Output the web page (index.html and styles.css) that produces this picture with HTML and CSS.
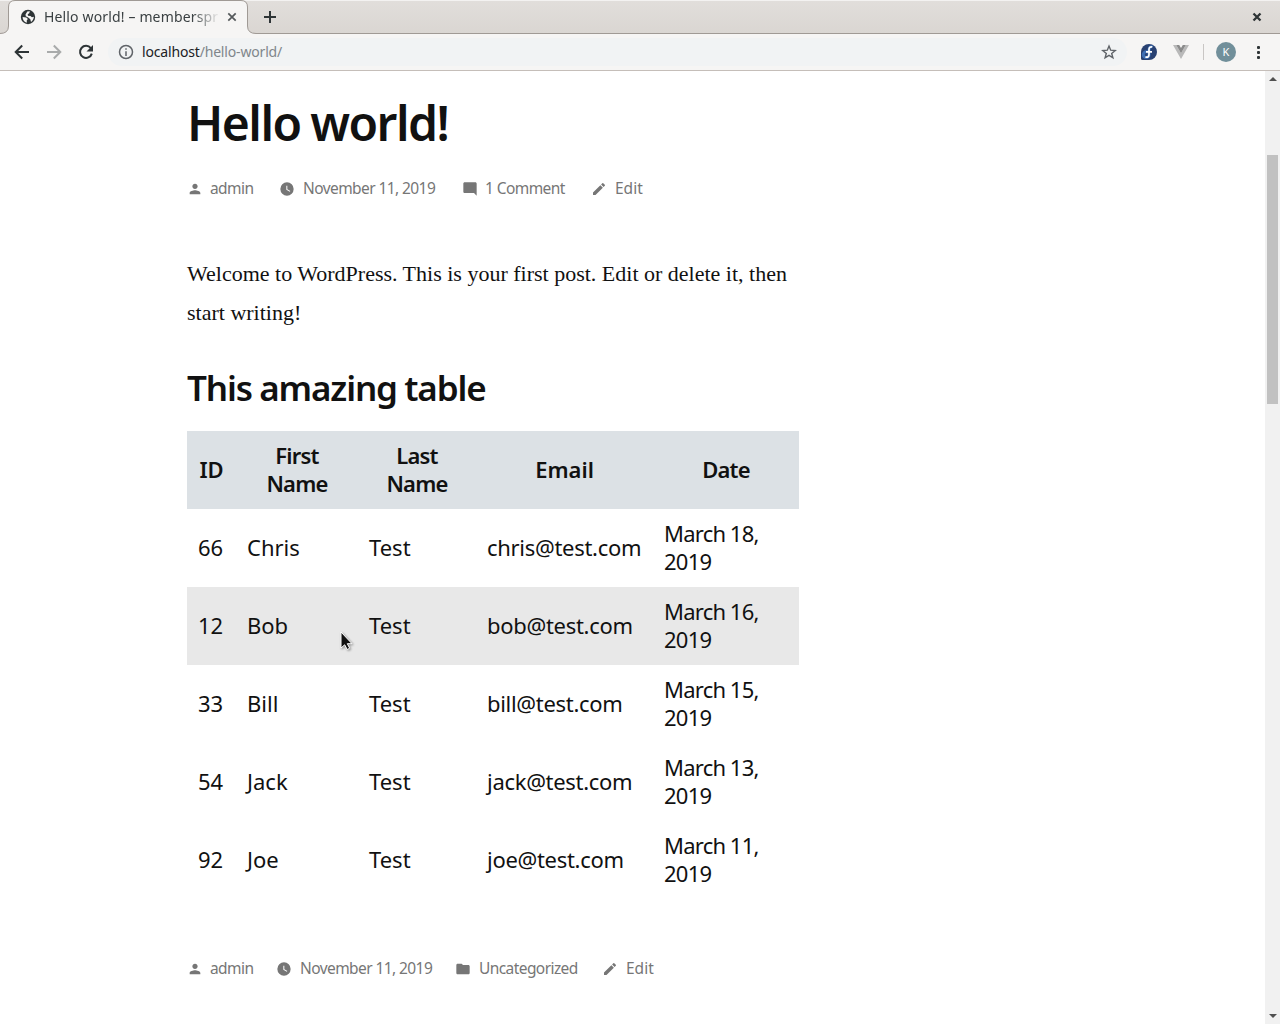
FILE: index.html
```html
<!DOCTYPE html>
<html lang="en">
<head>
<meta charset="utf-8">
<title>Hello world!</title>
<link rel="stylesheet" href="styles.css">
</head>
<body>
<svg class="defs" width="0" height="0">
  <symbol id="user" viewBox="0 0 24 24"><path d="M12 12c2.210 0 4-1.790 4-4s-1.790-4-4-4-4 1.790-4 4 1.790 4 4 4zm0 2c-2.670 0-8 1.340-8 4v2h16v-2c0-2.660-5.330-4-8-4z"/></symbol>
  <symbol id="clock" viewBox="0 0 24 24"><path fill-rule="evenodd" d="M12 2a10 10 0 1 0 0 20 10 10 0 0 0 0-20zm4.200 14.200L11 13V7h1.500v5.200l4.500 2.700z"/></symbol>
  <symbol id="comment" viewBox="0 0 24 24"><path d="M21.990 4c0-1.100-.89-2-1.990-2H4c-1.100 0-2 .9-2 2v12c0 1.100.9 2 2 2h14l4 4z"/></symbol>
  <symbol id="pencil" viewBox="0 0 24 24"><path d="M3 17.250V21h3.750L17.810 9.940l-3.750-3.750zM20.710 7.040a1 1 0 0 0 0-1.410l-2.340-2.340a1 1 0 0 0-1.410 0l-1.830 1.830 3.750 3.750z"/></symbol>
  <symbol id="folder" viewBox="0 0 24 24"><path d="M10 4H4c-1.100 0-2 .9-2 2v12c0 1.100.9 2 2 2h16c1.100 0 2-.9 2-2V8c0-1.100-.9-2-2-2h-8z"/></symbol>
</svg>

<div class="window">
  <header class="tabstrip">
    <svg class="tab-shape" width="256" height="34" viewBox="0 0 256 34"><path class="fill" d="M0 34v-.5Q8.500 33.500 8.500 26V7Q8.500.5 15 .5H241Q247.500.5 247.500 7V26Q247.500 33.500 256 33.500V34z"/><path class="line" d="M0 33.500Q8.500 33.500 8.500 26V7Q8.500.5 15 .5H241Q247.500.5 247.500 7V26Q247.500 33.500 256 33.500"/></svg>
    <div class="tab">
      <svg class="globe" width="16" height="16" viewBox="0 0 16 16"><circle cx="8" cy="8" r="7.200"/><path d="M2.600 8.100 6.300 8.500 7.900 10 6.800 11.300V13.800C4.300 13.200 2.600 11 2.600 8.100zM7.300 2.600l2.600-.4L9.200 4.300l-1.500.9.300 1.500 2.500.2 1.400 1.300 2-.4C13.700 10 12.600 12 11 12.900L10.300 10.200 8.200 8.400 5.800 7.300 5.500 5.500z"/></svg>
      <span class="tab-title">Hello world! – memberspr</span>
      <svg class="tab-close" width="10" height="10" viewBox="0 0 10 10"><path d="M1.300 1.300l7.400 7.400M8.700 1.300L1.300 8.700"/></svg>
    </div>
    <svg class="new-tab" width="14" height="14" viewBox="0 0 14 14"><path d="M7 1v12M1 7h12"/></svg>
    <svg class="window-close" width="10" height="10" viewBox="0 0 10 10"><path d="M1.500 1.500l7 7M8.500 1.500l-7 7"/></svg>
  </header>

  <nav class="toolbar">
    <svg class="nav-icon" width="16" height="16" viewBox="0 0 16 16"><path d="M15 8H2M8.200 1.500L1.700 8l6.500 6.500"/></svg>
    <svg class="nav-icon forward" width="16" height="16" viewBox="0 0 16 16"><path d="M1 8h13M7.800 1.500L14.300 8l-6.500 6.500"/></svg>
    <svg class="nav-icon" width="16" height="16" viewBox="0 0 16 16"><path d="M12.800 4.200A6 6 0 1 0 13.800 9.600"/><path class="head" d="M15 1v6.500H8.500z"/></svg>
    <div class="address">
      <svg class="info" width="16" height="16" viewBox="0 0 16 16"><circle cx="8" cy="8" r="6.500"/><path d="M8 7.200V12M8 4.200v1.600"/></svg>
      <span class="url"><b>localhost</b>/hello-world/</span>
      <svg class="star" width="16" height="16" viewBox="0 0 16 16"><path d="M8 2l1.700 4.200 4.500.3-3.500 2.900 1.200 4.400L8 11.400l-3.900 2.400 1.200-4.400L1.800 6.500l4.500-.3z"/></svg>
    </div>
    <svg class="fedora" width="16" height="16" viewBox="0 0 16 16"><path class="bg" d="M8 0a8 8 0 1 1 0 16H1.500A1.500 1.500 0 0 1 0 14.500V8a8 8 0 0 1 8-8z"/><path class="ring" d="M7.500 7.800H5.200a2.900 2.900 0 1 0 2.900 2.900V5.200a2.500 2.500 0 0 1 3.500-2.300"/><path class="f" d="M4.500 12.800c1.800 1 3.500 0 3.500-2V5.300c0-1.900 1.400-2.800 3.300-2.300M5 7.900h6"/></svg>
    <svg class="vue" width="16" height="14" viewBox="0 0 16 14"><path fill="#b9b9b9" d="M0 0h3.200L8 8.200 12.800 0H16L8 14z"/><path fill="#8b8b8b" d="M3.200 0h3L8 3.100 9.800 0h3L8 8.200z"/></svg>
    <span class="divider"></span>
    <span class="avatar">K</span>
    <span class="menu"><i></i><i></i><i></i></span>
  </nav>

  <div class="viewport">
    <main class="post">
      <h1>Hello world!</h1>
      <div class="meta">
        <span class="m-user"><svg><use href="#user"/></svg>admin</span>
        <span class="m-date"><svg><use href="#clock"/></svg>November 11, 2019</span>
        <span class="m-comment"><svg><use href="#comment"/></svg>1 Comment</span>
        <span class="m-edit"><svg><use href="#pencil"/></svg>Edit</span>
      </div>
      <p>Welcome to WordPress. This is your first post. Edit or delete it, then<br>start writing!</p>
      <h2>This amazing table</h2>
      <table>
        <colgroup><col class="c-id"><col class="c-first"><col class="c-last"><col class="c-email"><col class="c-date"></colgroup>
        <thead><tr><th>ID</th><th class="tight">First<br>Name</th><th class="tight">Last<br>Name</th><th>Email</th><th class="tight">Date</th></tr></thead>
        <tbody>
          <tr><td>66</td><td>Chris</td><td>Test</td><td>chris@test.com</td><td>March 18,<br>2019</td></tr>
          <tr class="hover"><td>12</td><td>Bob</td><td>Test</td><td>bob@test.com</td><td>March 16,<br>2019</td></tr>
          <tr><td>33</td><td>Bill</td><td>Test</td><td>bill@test.com</td><td>March 15,<br>2019</td></tr>
          <tr><td>54</td><td>Jack</td><td>Test</td><td>jack@test.com</td><td>March 13,<br>2019</td></tr>
          <tr><td>92</td><td>Joe</td><td>Test</td><td>joe@test.com</td><td>March 11,<br>2019</td></tr>
        </tbody>
      </table>
      <div class="meta footer-meta">
        <span class="m-user"><svg><use href="#user"/></svg>admin</span>
        <span class="m-date"><svg><use href="#clock"/></svg>November 11, 2019</span>
        <span class="m-cat"><svg><use href="#folder"/></svg>Uncategorized</span>
        <span class="m-edit"><svg><use href="#pencil"/></svg>Edit</span>
      </div>
    </main>
    <aside class="scrollbar">
      <svg width="8" height="4" viewBox="0 0 8 4"><path d="M0 4l4-4 4 4z"/></svg>
      <div class="thumb"></div>
      <svg width="8" height="4" viewBox="0 0 8 4"><path d="M0 0l4 4 4-4z"/></svg>
    </aside>
  </div>
</div>
<svg class="cursor" width="15" height="22" viewBox="0 0 15 22"><path d="M1 1v16l3.700-3.200 2.500 4.700 2.500-1.300-2.400-4.500H12z"/></svg>
</body>
</html>
```
FILE: styles.css
```css
* { box-sizing: border-box; }
body { margin: 0; font-family: "Noto Sans", sans-serif; color: #111; background: #fff; }
svg { display: block; flex: none; }
.defs { position: absolute; }
.window { height: 1024px; display: flex; flex-direction: column; overflow: hidden; }

.tabstrip { height: 34px; flex: none; display: flex; align-items: center; background: linear-gradient(#e1dedb, #dad6d2); border-bottom: 1px solid #a09a95; border-top: 1px solid #f3f2f1; }
.tab-shape { margin: 0 -256px 0 0; position: relative; }
.tab-shape .fill { fill: #f6f5f4; }
.tab-shape .line { fill: none; stroke: #a09a95; }
.tab { width: 248px; padding-left: 20px; display: flex; align-items: center; position: relative; }
.globe circle { fill: #2e3436; }
.globe path { fill: #f6f5f4; }
.tab-title { width: 176px; margin: 0 7px 0 8px; white-space: nowrap; font-size: 14px; line-height: 20px; letter-spacing: .15px; color: #3a4042; -webkit-mask-image: linear-gradient(90deg, #000 148px, transparent 176px); mask-image: linear-gradient(90deg, #000 148px, transparent 176px); }
.tab-close path { stroke: #55595b; stroke-width: 1.700; }
.new-tab { margin-left: 15px; }
.new-tab path { stroke: #2e3436; stroke-width: 2; }
.window-close { margin-left: auto; margin-right: 18px; }
.window-close path { stroke: #2e3436; stroke-width: 2.300; }

.toolbar { height: 37px; flex: none; display: flex; align-items: center; padding-left: 14px; background: #f6f5f4; border-bottom: 1px solid #c5beb9; }
.nav-icon { margin-right: 16px; fill: none; stroke: #2e3436; stroke-width: 2; }
.nav-icon.forward { stroke: #a9abab; }
.nav-icon .head { fill: #2e3436; stroke: none; }
.address { width: 1019px; height: 28px; margin-left: -2px; padding: 0 10px; border-radius: 14px; display: flex; align-items: center; background: #f1f3f4; }
.info { fill: none; stroke: #5f6368; stroke-width: 1.500; }
.url { margin: 0 0 2px 8px; font-size: 14px; letter-spacing: -.17px; color: #80868b; }
.url b { font-weight: 400; color: #202124; }
.star { margin-left: auto; fill: none; stroke: #5f6368; stroke-width: 1.400; }
.fedora { margin-left: 14px; }
.fedora .bg { fill: #294172; }
.fedora .ring { fill: none; stroke: #3c6eb4; stroke-width: 3; }
.fedora .f { fill: none; stroke: #fff; stroke-width: 1.700; }
.vue { margin-left: 16px; }
.divider { width: 1px; height: 16px; margin-left: 14px; background: #c9c6c4; }
.avatar { width: 20px; height: 20px; margin-left: 12px; border-radius: 50%; background: #718f9a; color: #fff; font-size: 11px; line-height: 20px; text-align: center; }
.menu { margin-left: 21px; display: flex; flex-direction: column; gap: 2px; }
.menu i { width: 3px; height: 3px; border-radius: 1px; background: #2e3436; }

.viewport { flex: 1; min-height: 0; display: flex; justify-content: space-between; }
.post { width: 812px; padding: 22px 13px 0 187px; }
h1 { margin: 0; font-size: 48px; line-height: 60px; font-weight: 600; letter-spacing: -1.5px; word-spacing: -1.5px; white-space: nowrap; }
.meta { margin-top: 23px; height: 24px; display: flex; align-items: center; font-size: 15.5px; line-height: 24px; letter-spacing: -.58px; color: #767676; white-space: nowrap; }
.meta span { display: flex; align-items: center; }
.meta svg { width: 16px; height: 16px; margin: 2px 7px 0 0; fill: #767676; }
.meta .m-date svg, .meta .m-edit svg, .meta .m-cat svg { margin-right: 8px; }
.meta .m-edit { letter-spacing: 0; }
.m-user { width: 92px; }
.m-date { width: 183px; }
.m-comment { width: 129px; }
p { margin: 54px 0 0; font-family: "Liberation Serif", serif; font-size: 22px; line-height: 39px; white-space: nowrap; }
h2 { margin: 32px 0 0; font-size: 35px; line-height: 48px; font-weight: 600; letter-spacing: -1.15px; word-spacing: -.5px; white-space: nowrap; }
table { width: 612px; margin-top: 19px; table-layout: fixed; border-collapse: collapse; font-size: 22px; line-height: 28px; }
.c-id { width: 49px; }
.c-first { width: 122px; }
.c-last { width: 118px; }
.c-email { width: 177px; }
.c-date { width: 146px; }
tr { height: 78px; }
th, td { padding: 10px 11px 12px; white-space: nowrap; vertical-align: middle; }
td:nth-child(4) { letter-spacing: -.3px; }
td:nth-child(5) { letter-spacing: -.75px; word-spacing: -.5px; }
th { background: #dce1e5; font-weight: 600; text-align: center; }
.tight { letter-spacing: -.8px; }
.hover { background: #e8e8e8; }
.footer-meta { margin-top: 57px; }
.footer-meta .m-user { width: 89px; }
.footer-meta .m-date { width: 179px; }
.m-cat { width: 147px; }

.scrollbar { width: 15px; display: flex; flex-direction: column; align-items: center; padding: 6px 0; background: #f1f1f1; }
.scrollbar svg { fill: #505050; }
.thumb { width: 11px; height: 249px; margin: 74px 0 auto; background: #c1c1c1; }
.cursor { position: absolute; left: 340px; top: 631px; fill: #111; stroke: #fff; filter: drop-shadow(1px 1px 1px #0006); }
```
